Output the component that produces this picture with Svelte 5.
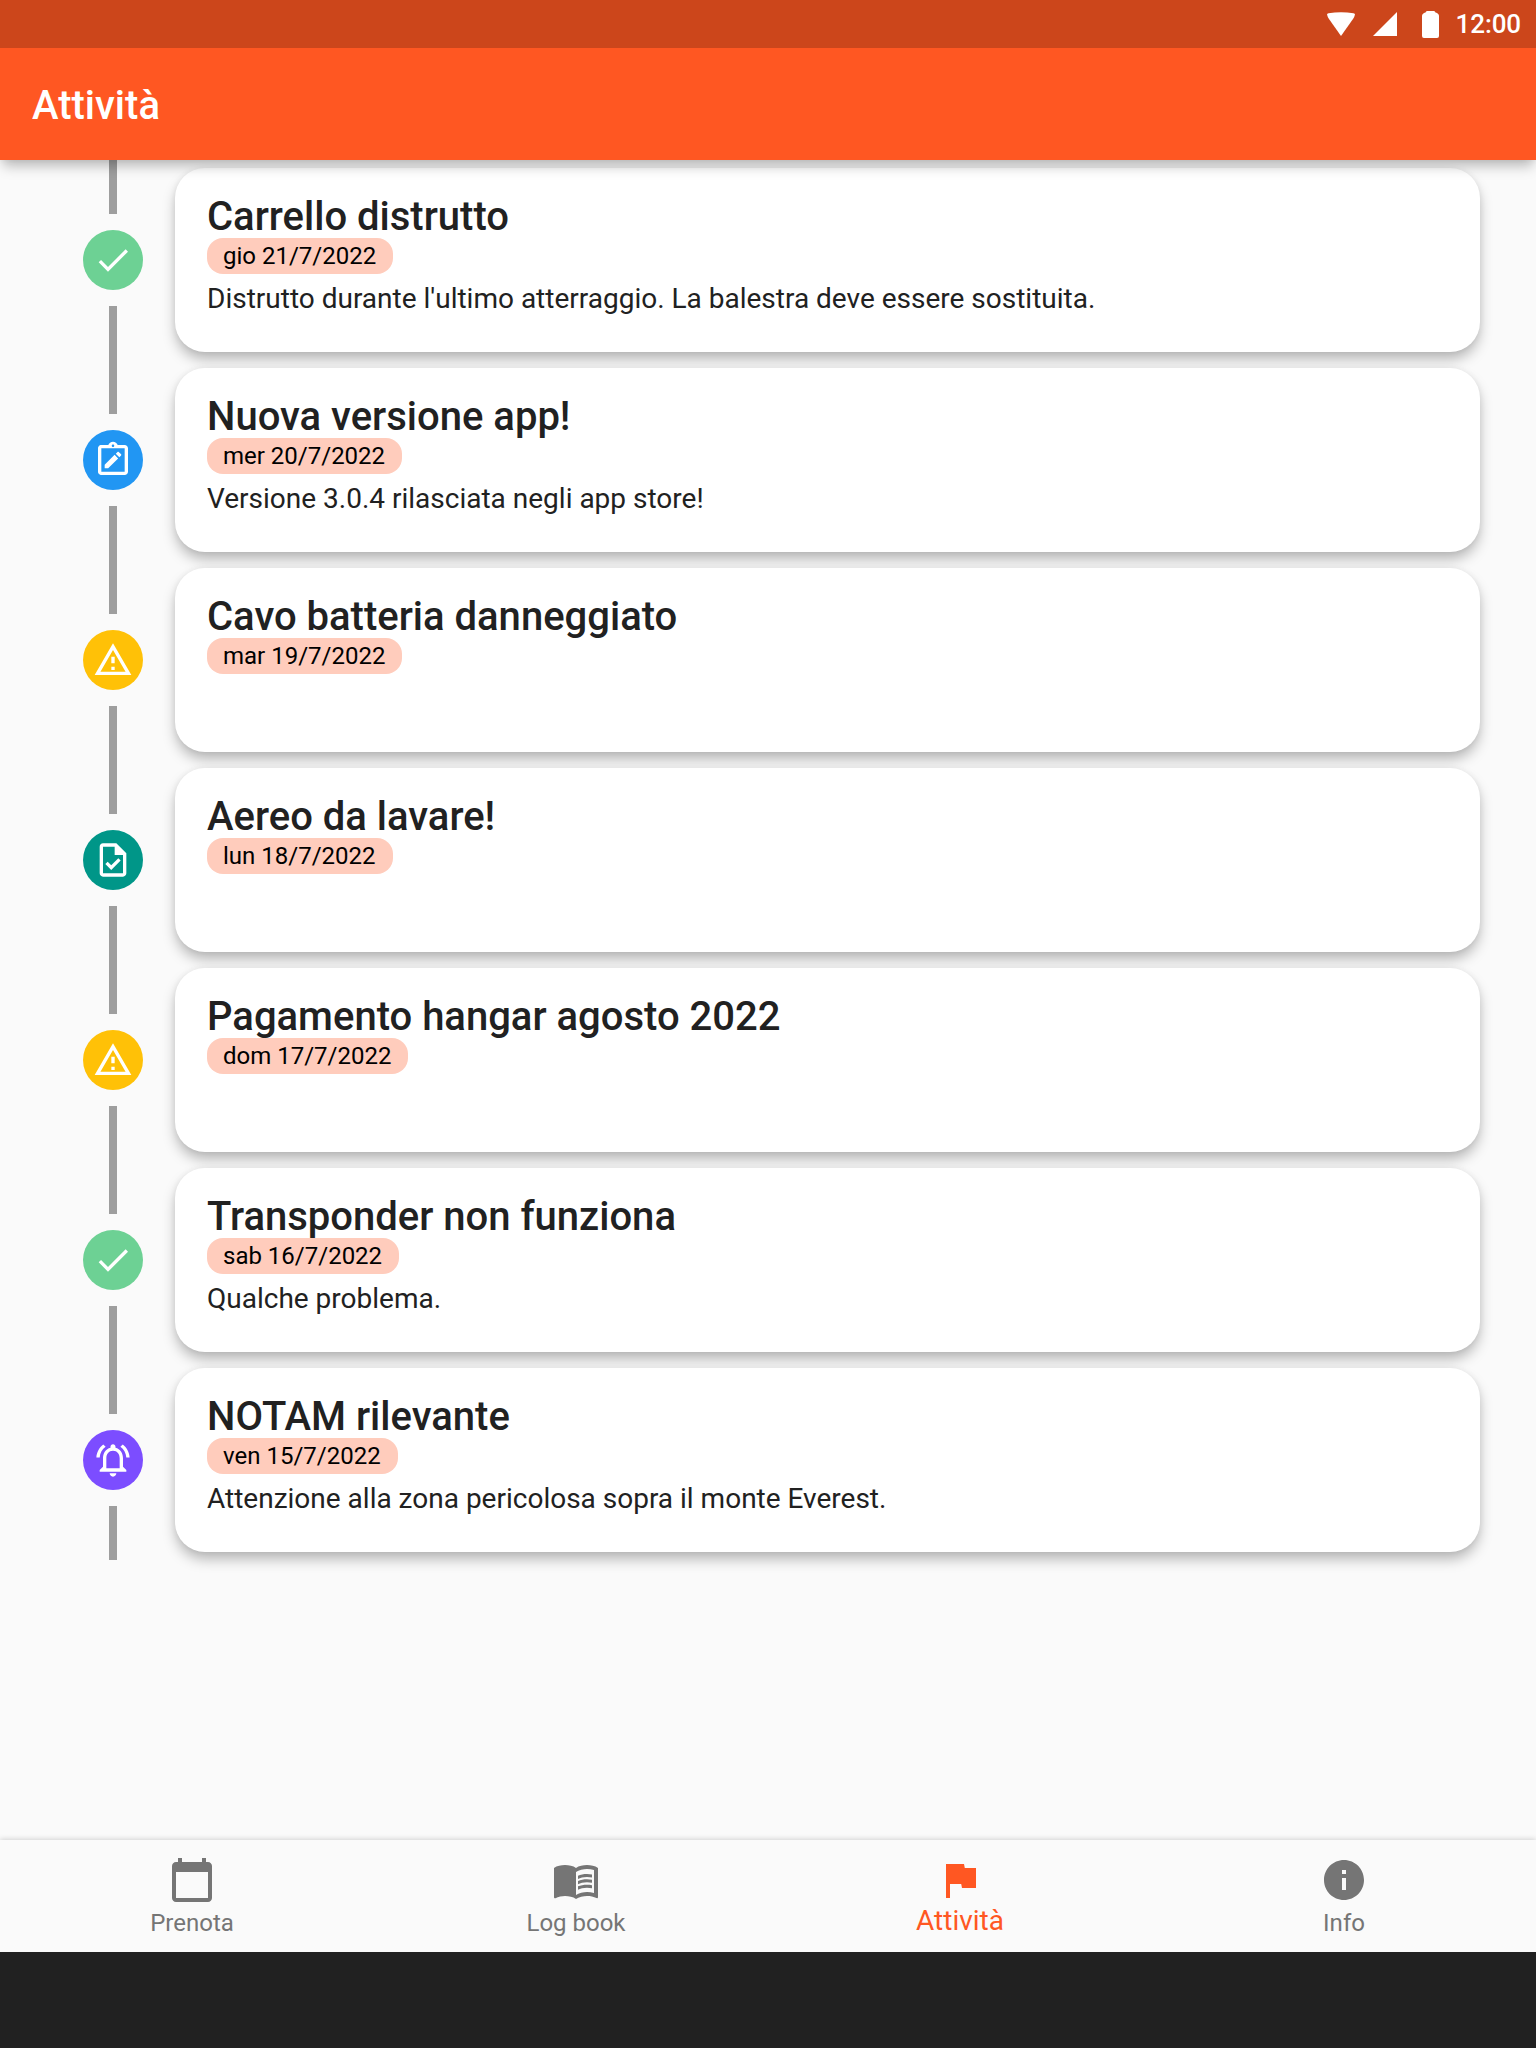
<script>
  const paths = {
    check: 'M9 16.17L4.83 12l-1.42 1.41L9 19 21 7l-1.41-1.41z',
    note: 'M19 3h-4.18C14.4 1.84 13.3 1 12 1s-2.4.84-2.82 2H5c-.14 0-.27.01-.4.04-.39.08-.74.28-1.01.55-.18.18-.33.4-.43.64C3.06 4.46 3 4.72 3 5v14c0 .27.06.54.16.78s.25.45.43.64c.27.27.62.47 1.01.55.13.02.26.03.4.03h14c1.1 0 2-.9 2-2V5c0-1.1-.9-2-2-2zm-7-.25c.41 0 .75.34.75.75s-.34.75-.75.75-.75-.34-.75-.75.34-.75.75-.75zM19 19H5V5h14v14zM15.08 11.03l-2.12-2.12L7 14.86V17h2.1l5.98-5.97zM16.85 9.27c.2-.2.2-.51 0-.71l-1.41-1.41c-.2-.2-.51-.2-.71 0l-1.06 1.06 2.12 2.12 1.06-1.06z',
    warning: 'M12 5.99L19.53 19H4.47L12 5.99M12 2L1 21h22L12 2zm1 14h-2v2h2v-2zm0-6h-2v4h2v-4z',
    task: 'M14 2H6c-1.1 0-1.99.9-1.99 2L4 20c0 1.1.89 2 1.99 2H18c1.1 0 2-.9 2-2V8l-6-6zm4 18H6V4h7v5h5v11zM8.82 13.05L7.4 14.46 10.94 18l5.66-5.66-1.41-1.41-4.24 4.24-2.13-2.12z',
    bell: 'M12 22c1.1 0 2-.9 2-2h-4c0 1.1.9 2 2 2zm6-6v-5c0-3.07-1.63-5.64-4.5-6.32V4c0-.83-.67-1.5-1.5-1.5s-1.5.67-1.5 1.5v.68C7.64 5.36 6 7.92 6 11v5l-2 2v1h16v-1l-2-2zm-2 1H8v-6c0-2.48 1.51-4.5 4-4.5s4 2.02 4 4.5v6zM7.58 4.08L6.15 2.65C3.75 4.48 2.17 7.3 2.03 10.5h2c.15-2.65 1.51-4.97 3.55-6.42zm12.39 6.42h2c-.15-3.2-1.73-6.02-4.12-7.85l-1.42 1.43c2.02 1.45 3.39 3.77 3.54 6.42z',
    calendar: 'M20 3h-1V1h-2v2H7V1H5v2H4c-1.1 0-2 .9-2 2v16c0 1.1.9 2 2 2h16c1.1 0 2-.9 2-2V5c0-1.1-.9-2-2-2zm0 18H4V8h16v13z',
    book: 'M17.5 4.5c-1.95 0-4.05.4-5.5 1.5-1.45-1.1-3.55-1.5-5.5-1.5S2.45 4.9 1 6v14.65c0 .65.73.45.75.45C3.1 20.45 5.05 20 6.5 20c1.95 0 4.05.4 5.5 1.5 1.35-.85 3.8-1.5 5.5-1.5 1.65 0 3.35.3 4.75 1.05.41.21.75-.19.75-.45V6c-1.49-1.12-3.63-1.5-5.5-1.5zm3.5 14c-1.1-.35-2.3-.5-3.5-.5-1.7 0-4.15.65-5.5 1.5V8c1.35-.85 3.8-1.5 5.5-1.5 1.2 0 2.4.15 3.5.5v11.5z',
    flag: 'M14.4 6L14 4H5v17h2v-7h5.6l.4 2h7V6z',
    info: 'M12 2C6.48 2 2 6.48 2 12s4.48 10 10 10 10-4.48 10-10S17.52 2 12 2zm1 15h-2v-6h2v6zm0-8h-2V7h2v2z'
  };

  const activities = [
    { kind: 'check', title: 'Carrello distrutto', date: 'gio 21/7/2022', text: "Distrutto durante l'ultimo atterraggio. La balestra deve essere sostituita." },
    { kind: 'note', title: 'Nuova versione app!', date: 'mer 20/7/2022', text: 'Versione 3.0.4 rilasciata negli app store!' },
    { kind: 'warning', title: 'Cavo batteria danneggiato', date: 'mar 19/7/2022' },
    { kind: 'task', title: 'Aereo da lavare!', date: 'lun 18/7/2022' },
    { kind: 'warning', title: 'Pagamento hangar agosto 2022', date: 'dom 17/7/2022' },
    { kind: 'check', title: 'Transponder non funziona', date: 'sab 16/7/2022', text: 'Qualche problema.' },
    { kind: 'bell', title: 'NOTAM rilevante', date: 'ven 15/7/2022', text: 'Attenzione alla zona pericolosa sopra il monte Everest.' }
  ];

  const tabs = [
    { icon: 'calendar', label: 'Prenota' },
    { icon: 'book', label: 'Log book' },
    { icon: 'flag', label: 'Attività', active: true },
    { icon: 'info', label: 'Info' }
  ];
</script>

<div class="screen">
  <header>
    <div class="status">
      <svg class="wifi" viewBox="0 0 28 24"><path d="M0 2.6Q0 1.6 1.5 1.2Q14-.8 26.500 1.2Q28 1.600 28 2.600Q27.700 4.500 26 7L14 24L2 7Q.3 4.500 0 2.600z" /></svg>
      <svg class="signal" viewBox="0 0 24 24"><path d="M24 0v24H0z" /></svg>
      <svg class="battery" viewBox="0 0 17 27"><path d="M5 0h7q1 0 1.500 1.500Q17 2.500 17 5v20q0 2-2 2H2q-2 0-2-2V5q0-2.500 3.500-3.500Q4 0 5 0z" /></svg>
      <span class="clock">12:00</span>
    </div>
    <h1>Attività</h1>
  </header>

  <main>
    {#each activities as item}
      <div class="row">
        <div class="rail">
          <span class="line"></span>
          <span class="dot {item.kind}"><svg viewBox="0 0 24 24"><path d={paths[item.kind]} /></svg></span>
          <span class="line"></span>
        </div>
        <article>
          <h2>{item.title}</h2>
          <span class="chip">{item.date}</span>
          {#if item.text}<p>{item.text}</p>{/if}
        </article>
      </div>
    {/each}
  </main>

  <nav>
    {#each tabs as tab}
      <div class="tab" class:active={tab.active}>
        <svg viewBox="0 0 24 24">
          <path d={paths[tab.icon]} />
          {#if tab.icon === 'book'}
            <path d="M17.500 10.500c.88 0 1.730.090 2.500.260V9.240c-.79-.15-1.640-.24-2.500-.24-1.700 0-3.240.290-4.500.830v1.660c1.130-.64 2.700-.99 4.500-.99zM13 12.490v1.660c1.130-.64 2.700-.99 4.500-.99.880 0 1.730.090 2.500.260V11.900c-.79-.15-1.640-.24-2.500-.24-1.700 0-3.240.300-4.500.830zM17.500 14.330c-1.700 0-3.240.290-4.500.830v1.660c1.130-.64 2.700-.99 4.500-.99.880 0 1.730.090 2.500.260v-1.520c-.79-.16-1.640-.24-2.500-.24z" />
          {/if}
        </svg>
        <span>{tab.label}</span>
      </div>
    {/each}
  </nav>
  <div class="system"></div>
</div>

<style>
  :global(body) { margin: 0; }
  .screen {
    display: flex;
    flex-direction: column;
    width: 1536px;
    height: 2048px;
    overflow: hidden;
    background: #fafafa;
    font-family: Roboto, sans-serif;
    color: #212121;
  }
  svg { display: block; fill: currentColor; }
  header {
    position: relative;
    z-index: 1;
    height: 160px;
    background: #ff5722;
    color: #fff;
    box-shadow: 0 9px 12px -3px rgba(0, 0, 0, .26), 0 0 6px rgba(0, 0, 0, .06);
  }
  .status {
    box-sizing: border-box;
    height: 48px;
    padding-right: 15px;
    display: flex;
    align-items: center;
    justify-content: flex-end;
    background: #cc461b;
  }
  .wifi { width: 28px; height: 24px; margin-right: 18px; }
  .signal { width: 24px; height: 24px; margin-right: 25px; }
  .battery { width: 17px; height: 27px; margin-right: 17px; }
  .clock { font-size: 26px; line-height: 48px; font-weight: 500; letter-spacing: -.1px; }
  h1 {
    margin: 0;
    padding: 3px 0 0 32px;
    font-size: 40px;
    line-height: 110px;
    font-weight: 500;
  }
  main { flex: 1; }
  .row { display: flex; height: 200px; padding: 0 56px 0 83px; }
  .rail {
    display: flex;
    flex-direction: column;
    align-items: center;
    gap: 16px;
    width: 60px;
    margin-right: 32px;
  }
  .line { flex: 1; width: 8px; background: #9e9e9e; }
  .dot {
    display: grid;
    place-items: center;
    width: 60px;
    height: 60px;
    border-radius: 50%;
    color: #fff;
  }
  .dot svg { width: 40px; height: 40px; }
  .check { background: #6dd194; }
  .note { background: #2196f3; }
  .warning { background: #ffc107; }
  .task { background: #009688; }
  .bell { background: #7c4dff; }
  article {
    box-sizing: border-box;
    flex: 1;
    display: flex;
    flex-direction: column;
    align-items: flex-start;
    margin: 8px 0;
    padding: 26px 32px 24px;
    border-radius: 30px;
    background: #fff;
    box-shadow: 0 8px 14px -1px rgba(0, 0, 0, .28), 0 0 6px rgba(0, 0, 0, .06);
  }
  h2 {
    position: relative;
    z-index: 1;
    margin: 0 0 -2px;
    font-size: 40px;
    line-height: 46px;
    font-weight: 500;
  }
  .chip {
    height: 36px;
    padding: 0 17px 0 16px;
    border-radius: 16px;
    background: #ffccbc;
    color: #000;
    font-size: 24px;
    line-height: 36px;
  }
  p {
    margin: 8px 0 0;
    font-size: 28px;
    line-height: 34px;
  }
  nav {
    position: relative;
    display: flex;
    height: 112px;
    background: #fafafa;
    box-shadow: 0 -1px 5px rgba(0, 0, 0, .16);
  }
  .tab {
    flex: 1;
    display: flex;
    flex-direction: column;
    align-items: center;
    padding-top: 16px;
    color: #757575;
    font-size: 24px;
    line-height: 38px;
  }
  .tab svg { width: 48px; height: 48px; }
  .tab.active { color: #ff5722; font-size: 28px; line-height: 34px; }
  .system { height: 96px; background: #212121; position: relative; }
</style>
